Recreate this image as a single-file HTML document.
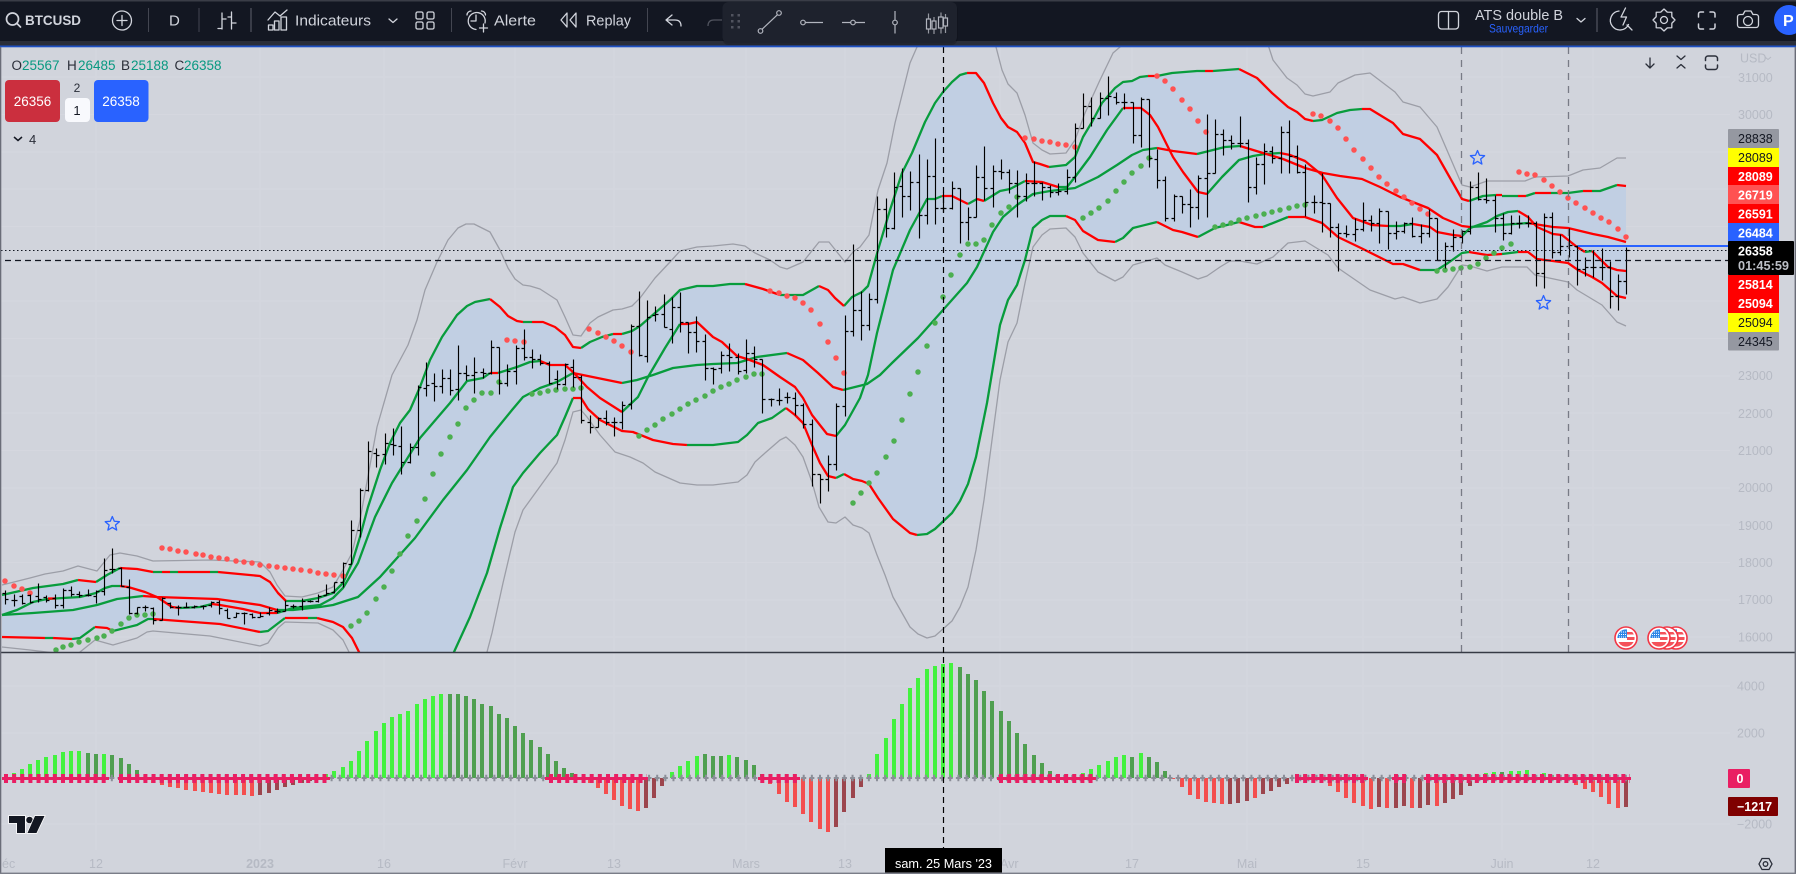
<!DOCTYPE html>
<html lang="fr"><head><meta charset="utf-8"><title>BTCUSD</title>
<style>
html,body{margin:0;padding:0;background:#d1d4dc;overflow:hidden}
svg{display:block;font-family:"Liberation Sans",sans-serif}
.ax{fill:#b6bac4;font-size:12.5px}
.bl{fill:#131722;font-size:12.5px}
.wh{fill:#fff;font-size:12.5px;font-weight:700}
.tb{fill:#d1d4dc;font-size:15px}
.ic{fill:none;stroke:#d1d4dc;stroke-width:1.3;stroke-linecap:round;stroke-linejoin:round}
.g{fill:none;stroke:#089c3c;stroke-width:2.3;stroke-linejoin:round}
.r{fill:none;stroke:#ff0000;stroke-width:2.3;stroke-linejoin:round}
.o{fill:#089981;font-size:13.5px}
.ol{fill:#2a2e39;font-size:13.5px}
</style></head><body>
<svg xmlns="http://www.w3.org/2000/svg" width="1796" height="874" viewBox="0 0 1796 874">
<defs>
<clipPath id="mp"><rect x="1" y="47" width="1794" height="605"/></clipPath>
<clipPath id="fc"><circle r="8.6"/></clipPath>
</defs>
<rect width="1796" height="874" fill="#d1d4dc"/>
<!-- grid -->
<path d="M0 77H1730M0 114.5H1730M0 152H1730M0 189H1730M0 226.500H1730M0 264H1730M0 301H1730M0 338.500H1730M0 376H1730M0 413H1730M0 450.500H1730M0 488H1730M0 525H1730M0 562.500H1730M0 600H1730M0 637H1730M0 686H1730M0 733H1730M0 824H1730M96 47V850M260 47V850M384 47V850M515 47V850M614 47V850M746 47V850M845 47V850M1000 47V850M1132 47V850M1247 47V850M1363 47V850M1502 47V850M1593 47V850" stroke="#fff" stroke-opacity=".09" stroke-width="1" fill="none"/>

<g clip-path="url(#mp)">
<!-- band fill -->
<path fill="#c1cfe3" d="M2 595L33 588 63 584 78 580 96 582 107 575 120 568 137 569 153 572 210 572 260 576 270 582 278 593 286 601 302 601 318 598 333 593 343 583 352 563 360 537 368 507 380 470 390 443 400 423 410 410 420 387 430 360 442 337 457 315 467 306 475 302 490 299 500 307 508 316 517 321 523 322 543 322 555 327 565 335 573 347 581 348 590 342 602 337 613 334 622 334 632 331 640 326 655 313 670 300 680 290 697 286 713 286 730 284 745 284 763 289 780 295 803 295 819 286 828 290 835 298 844 306 852 297 862 292 868 286 878 250 890 210 902 173 912 153 925 122 935 103 943 92 952 82 960 75 967 73 976 73 984 83 993 103 1001 118 1008 127 1017 132 1025 143 1033 162 1040 164 1049 167 1066 165 1075 157 1083 137 1092 122 1102 103 1115 88 1123 82 1132 81 1140 77 1157 76 1172 73 1197 71 1239 69 1257 78 1272 93 1288 107 1297 112 1305 119 1313 121 1322 120 1337 113 1350 110 1362 109 1370 109 1393 123 1403 134 1420 139 1437 155 1462 199 1469 201 1483 196 1518 196 1535 193 1568 193 1583 191 1600 191 1617 185 1626 186V298L1617 296 1602 283 1592 277 1578 270 1568 263 1553 261 1537 259 1528 252 1518 252 1502 254 1487 255 1469 252 1462 253 1448 263 1437 270 1420 270 1403 264 1393 264 1363 249 1338 237 1322 223 1305 217 1288 217 1263 227 1255 227 1239 222 1215 228 1198 237 1182 232 1173 230 1157 222 1133 228 1123 238 1115 242 1098 240 1083 231 1075 220 1066 216 1050 216 1042 220 1033 228 1025 260 1017 285 1008 300 1000 325 987 403 976 457 968 484 960 501 952 513 935 529 927 534 917 535 910 533 893 519 878 498 869 484 862 481 853 479 844 474 836 478 828 476 820 463 812 445 803 423 795 415 786 408 772 418 758 423 747 435 738 442 713 445 687 445 673 444 653 440 633 432 622 431 600 420 588 409 581 398 573 398 565 417 557 435 540 453 523 473 513 487 500 528 487 573 470 617 454 652 448 665 365 665 359 652 352 638 343 627 333 622 317 618 285 618 268 631 260 632 220 624 153 619 148 619 137 625 113 631 107 628 95 627 80 638 72 639 2 637Z"/>
<!-- outer gray bands -->
<path fill="none" stroke="#9c9ea7" stroke-width="1.3" stroke-linejoin="round" d="M2 585L30 578 45 574 63 571 78 566 97 571 110 555 120 553 137 556 153 561 210 560 260 562 270 572 277 585 285 596 302 597 318 593 333 587 343 570 352 553 360 520 377 427 392 375 408 345 417 320 425 290 437 262 448 240 458 228 466 224 474 224 490 232 500 250 508 268 515 279 523 285 530 286 540 289 557 300 565 317 573 335 581 336 590 323 598 317 613 310 622 309 632 306 640 298 655 278 670 262 680 251 697 247 713 246 733 244 745 246 755 253 770 260 780 267 787 269 803 262 819 242 829 242 837 252 845 262 853 252 860 247 869 235 878 190 887 163 895 123 910 63 917 47 925 20 985 20 996 47 1002 70 1008 84 1017 93 1025 115 1033 143 1042 150 1050 154 1066 153 1075 140 1085 113 1100 80 1113 53 1120 47 1130 20 1260 20 1273 60 1287 78 1297 85 1305 94 1313 96 1330 92 1338 83 1355 75 1370 73 1395 92 1403 102 1420 107 1437 127 1462 185 1470 187 1487 181 1525 181 1535 177 1568 176 1583 170 1600 168 1617 158 1626 158"/>
<path fill="none" stroke="#9c9ea7" stroke-width="1.3" stroke-linejoin="round" d="M2 647L30 650 55 653 60 665 75 665 80 652 95 640 113 645 137 638 147 632 153 631 210 636 260 646 268 643 278 628 285 622 318 623 333 630 343 640 349 652 355 665 480 665 487 652 492 633 503 583 515 532 523 510 557 463 565 440 573 412 581 410 587 417 600 435 615 452 630 457 643 463 655 472 680 483 697 485 713 485 738 482 747 475 755 462 765 453 780 440 786 437 795 445 803 457 812 482 819 507 828 522 836 523 845 517 853 525 862 528 869 533 877 555 885 575 893 597 910 627 918 634 927 638 935 636 952 621 960 607 968 587 976 550 984 500 992 440 1000 380 1008 342 1017 323 1025 283 1033 247 1042 235 1050 229 1066 228 1075 237 1083 253 1098 272 1115 281 1123 277 1133 265 1157 258 1165 265 1182 272 1198 279 1207 276 1220 267 1230 261 1240 261 1257 264 1273 257 1288 243 1305 241 1328 255 1338 268 1370 290 1395 299 1403 297 1420 303 1437 299 1448 287 1462 265 1470 266 1487 271 1502 267 1527 267 1535 275 1568 282 1577 290 1602 305 1617 322 1626 326"/>
<!-- green segments -->
<path class="g" d="M2 595L33 588 63 584 78 580M96 582L107 575 120 568M153 572H162M170 572H178M210 572H218M286 601L302 601 318 598 333 593 343 583 352 563 360 537 368 507 380 470 390 443 400 423 410 410 420 387 430 360 442 337 457 315 467 306 475 302 490 299M523 322H532M581 348L590 342 602 337 613 334M622 334L632 331 640 326 655 313 670 300 680 290 697 286 713 286 730 284 745 284M780 295L803 295 819 286M844 306L852 297 862 292 868 286 878 250 890 210 902 173 912 153 925 122 935 103 943 92 952 82 960 75 967 73M1049 167L1066 165 1075 157 1083 137 1092 122 1102 103 1115 88 1123 82 1132 81 1140 77 1148 76M1157 76L1172 73 1197 71 1205 71M1213 71L1239 69M1313 121L1322 120 1337 113 1350 110 1362 109M1469 201L1483 196 1496 195M1502 196L1518 196M1526 196L1535 193M1551 193L1568 193 1583 191M1592 191L1600 191 1617 185"/>
<path class="g" d="M45 638H53M72 639L80 638 95 627M113 631L137 625 148 619 153 619M260 632L268 631 285 618M308 618H317M448 665L454 652 470 617 487 573 500 528 513 487 523 473 540 453 557 435 565 417 573 398M687 445L713 445 738 442 747 435 758 423 772 418 786 408M836 478L844 474M917 535L927 534 935 529 952 513 960 501 968 484 976 457 987 403 1000 325 1008 300 1017 285 1025 260 1033 228 1042 220 1050 216 1066 216M1115 242L1123 238 1133 228 1157 222M1198 237L1215 228 1239 222M1263 227L1288 217M1420 270L1437 270 1448 263 1462 253 1469 252M1502 254L1518 252"/>
<path class="g" d="M2 615L17 610 33 602 47 599 63 598 80 597 96 593 105 588 112 586 120 586M180 608L200 607 212 604M277 613L293 608 320 605 333 598 343 588 358 563 375 517 392 483 420 438 450 403 467 381 483 378 490 373M498 373L517 367 530 362 540 361M622 412L638 397 648 377 665 348 680 324M836 436L845 425 860 398 868 375 877 333 893 270 910 230 927 199 935 199 942 196M968 204L977 199M984 201L1000 191 1010 189 1025 181M1058 187L1067 187 1075 177 1090 157 1107 130 1123 108M1207 194L1222 177 1239 160 1253 156 1265 154 1280 153M1388 226L1400 226 1413 224M1462 236L1470 228 1487 222 1497 216 1508 212 1518 211M1585 252L1592 251"/>
<path class="g" d="M2 615L33 613 73 610 97 605 117 599 143 596M277 610L293 610 320 607 333 605 358 597 380 577 415 538 443 500 467 470 490 437 512 410 523 397 540 388 557 382 573 373M622 383L637 380 653 375 673 368 697 365 713 364 737 363 757 357 787 353M843 390L867 384 880 375 892 363 918 338 943 310 967 283 977 267 993 232 1003 217 1017 205 1033 194 1050 191 1067 189 1075 188 1098 177 1117 165 1132 155 1143 150 1157 148M1197 154L1225 147 1240 146M1470 227L1487 226 1528 223"/>
<!-- red segments -->
<path class="r" d="M78 580L96 582M120 568L137 569 153 572M162 572H170M178 572H210M218 572L260 576 270 582 278 593 286 601M490 299L500 307 508 316 517 321 523 322M532 322L543 322 555 327 565 335 573 347 581 348M613 334H622M745 284L763 289 780 295M819 286L828 290 835 298 844 306M967 73L976 73 984 83 993 103 1001 118 1008 127 1017 132 1025 143 1033 162 1040 164 1049 167M1148 76H1157M1205 71H1213M1239 69L1257 78 1272 93 1288 107 1297 112 1305 119 1313 121M1362 109L1370 109 1393 123 1403 134 1420 139 1437 155 1462 199 1469 201M1496 195H1502M1518 196H1526M1535 193H1551M1583 191H1592M1617 185L1626 186"/>
<path class="r" d="M2 637L45 638M53 638L72 639M95 627L107 628 113 631M153 619L220 624 260 632M285 618H308M317 618L333 622 343 627 352 638 359 652 365 665M573 398L581 398 588 409 600 420 622 431 633 432 653 440 673 444 687 445M786 408L795 415 803 423 812 445 820 463 828 476 836 478M844 474L853 479 862 481 869 484 878 498 893 519 910 533 917 535M1066 216L1075 220 1083 231 1098 240 1115 242M1157 222L1173 230 1182 232 1198 237M1239 222L1255 227 1263 227M1288 217L1305 217 1322 223 1338 237 1363 249 1393 264 1403 264 1420 270M1469 252L1487 255 1502 254M1518 252L1528 252 1537 259 1553 261 1568 263 1578 270 1592 277 1602 283 1617 296 1626 298"/>
<path class="r" d="M48 598.500L55 598.500M120 586L128 587 145 592 157 597 172 607 180 608M212 604L220 605 243 609 260 613 277 613M490 373H498M540 361L550 365 565 365 573 372 587 387 600 398 622 412M680 324L688 324 697 322 713 337 722 342 737 356 747 359 763 365 780 377 795 387 803 398 812 415 827 434 836 436M942 196L952 196 968 204M977 199L984 201M1025 181L1042 182 1058 187M1123 108L1132 108 1141 108 1150 115 1158 127 1173 157 1183 172 1198 192 1207 194M1280 153L1290 155 1305 161 1322 175 1337 198 1353 218 1372 225 1388 226M1413 224L1430 227 1437 232 1453 235 1462 236M1518 211L1528 217 1537 227 1553 234 1562 235 1577 247 1585 252M1592 251L1608 267 1617 270 1626 271"/>
<path class="r" d="M143 596L157 597 217 599 260 605 277 610M573 373L622 383M787 353L803 360 818 373 833 387 843 390M1157 148L1173 151 1197 154M1240 146L1263 153 1283 159 1305 168 1323 173 1340 176 1362 179 1380 187 1400 197 1428 208 1443 218 1462 226 1470 227M1528 223L1553 227 1568 228 1593 234 1608 237 1626 242"/>
<!-- dots -->
<path fill="none" stroke="#ff5252" stroke-width="5.500" stroke-linecap="round" d="M5 581h0M14 586h0M22 589h0M30 593h0M162 548h0M170 549h0M178 551h0M186 552h0M196 554h0M203 555h0M211 557h0M219 558h0M227 559h0M236 561h0M244 562h0M252 563h0M260 565h0M269 566h0M277 567h0M285 568h0M293 569h0M301 570h0M310 571h0M318 573h0M326 574h0M334 575h0M343 576h0M507 340h0M515 341h0M524 342h0M589 329h0M598 333h0M606 337h0M614 341h0M622 346h0M631 352h0M770 291h0M779 293h0M787 296h0M795 298h0M803 303h0M811 310h0M820 324h0M828 342h0M836 358h0M844 373h0M1025 138h0M1034 139h0M1042 141h0M1050 142h0M1058 144h0M1066 145h0M1075 147h0M1157 76h0M1165 81h0M1173 89h0M1182 100h0M1190 109h0M1198 121h0M1206 132h0M1313 114h0M1321 116h0M1330 121h0M1338 128h0M1346 139h0M1354 150h0M1363 159h0M1371 168h0M1379 177h0M1387 184h0M1396 191h0M1404 197h0M1412 203h0M1420 209h0M1428 214h0M1519 172h0M1527 174h0M1535 175h0M1544 180h0M1552 186h0M1560 192h0M1568 198h0M1576 203h0M1585 208h0M1593 213h0M1601 218h0M1609 222h0M1618 229h0M1626 237h0"/>
<path fill="none" stroke="#4caf50" stroke-width="5.500" stroke-linecap="round" d="M56 650h0M63 647h0M71 645h0M79 642h0M88 640h0M97 638h0M104 636h0M112 631h0M121 624h0M129 618h0M137 615h0M145 615h0M153 614h0M351 626h0M359 621h0M367 613h0M376 599h0M384 587h0M392 571h0M400 554h0M408 536h0M417 521h0M425 499h0M433 474h0M441 454h0M450 437h0M458 424h0M466 408h0M474 400h0M482 393h0M491 393h0M499 382h0M532 394h0M540 393h0M548 391h0M556 390h0M565 389h0M573 389h0M581 388h0M639 436h0M647 430h0M655 425h0M663 419h0M672 414h0M680 409h0M688 404h0M696 400h0M705 396h0M713 391h0M721 387h0M729 384h0M737 380h0M746 377h0M754 374h0M762 374h0M853 503h0M861 493h0M869 483h0M877 473h0M886 457h0M894 441h0M902 420h0M910 394h0M918 372h0M927 346h0M935 323h0M943 297h0M951 275h0M960 255h0M968 244h0M976 244h0M984 240h0M992 225h0M1001 213h0M1009 207h0M1017 197h0M1083 218h0M1091 213h0M1099 208h0M1108 201h0M1116 191h0M1124 182h0M1132 173h0M1141 166h0M1149 158h0M1215 227h0M1223 225h0M1231 223h0M1239 220h0M1247 218h0M1256 216h0M1264 214h0M1272 212h0M1280 210h0M1289 208h0M1297 206h0M1305 205h0M1437 271h0M1445 270h0M1453 269h0M1461 268h0M1470 267h0M1478 264h0M1486 258h0M1494 253h0M1502 248h0M1511 244h0"/>
<!-- OHLC bars -->
<path transform="translate(.5 .5)" fill="none" stroke="#000" stroke-width="1.150" d="M5 590V604M5 593h-3M5 599h3M14 594V606M14 600h-3M14 600h3M22 594V604M22 596h-3M22 603h3M30 594V603M30 595h-3M30 602h3M38 583V602M38 596h-3M38 599h3M46 595V602M46 597h-3M46 600h3M55 594V608M55 598h-3M55 605h3M63 588V608M63 605h-3M63 590h3M71 586V596M71 590h-3M71 594h3M79 591V597M79 594h-3M79 595h3M88 589V596M88 595h-3M88 595h3M96 590V603M96 596h-3M96 591h3M104 558V595M104 591h-3M104 570h3M112 548V573M112 569h-3M112 569h3M121 567V586M121 568h-3M121 586h3M129 579V614M129 587h-3M129 613h3M137 607V614M137 613h-3M137 607h3M145 605V611M145 607h-3M145 607h3M153 607V624M153 608h-3M153 620h3M162 597V620M162 620h-3M162 598h3M170 602V608M170 603h-3M170 607h3M178 605V615M178 607h-3M178 607h3M186 602V607M186 607h-3M186 607h3M194 605V608M194 607h-3M194 606h3M203 605V609M203 606h-3M203 606h3M211 601V607M211 605h-3M211 602h3M219 600V614M219 602h-3M219 608h3M227 608V618M227 610h-3M227 618h3M236 612V617M236 617h-3M236 613h3M244 612V624M244 613h-3M244 613h3M252 613V618M252 614h-3M252 617h3M260 612V617M260 617h-3M260 616h3M269 607V615M269 613h-3M269 610h3M277 608V613M277 611h-3M277 611h3M285 600V611M285 611h-3M285 605h3M293 604V608M293 606h-3M293 606h3M302 598V610M302 606h-3M302 601h3M310 600V602M310 601h-3M310 601h3M318 594V602M318 601h-3M318 596h3M326 584V595M326 595h-3M326 593h3M334 582V593M334 592h-3M334 582h3M343 562V587M343 582h-3M343 563h3M351 520V564M351 564h-3M351 530h3M360 488V537M360 530h-3M360 490h3M368 441V491M368 490h-3M368 451h3M376 448V467M376 453h-3M376 455h3M385 433V464M385 454h-3M385 443h3M393 428V455M393 444h-3M393 445h3M401 426V474M401 446h-3M401 462h3M410 443V463M410 462h-3M410 447h3M418 385V455M418 447h-3M418 387h3M426 362V396M426 388h-3M426 385h3M434 373V401M434 383h-3M434 386h3M442 369V393M442 386h-3M442 378h3M450 369V395M450 378h-3M450 390h3M458 345V400M458 389h-3M458 373h3M466 365V380M466 373h-3M466 375h3M474 357V393M474 375h-3M474 372h3M483 368V378M483 372h-3M483 373h3M491 340V374M491 373h-3M491 347h3M499 347V394M499 347h-3M499 383h3M507 364V386M507 383h-3M507 371h3M516 345V384M516 371h-3M516 348h3M524 329V360M524 348h-3M524 357h3M532 349V368M532 357h-3M532 359h3M540 354V365M540 359h-3M540 363h3M549 361V384M549 363h-3M549 383h3M557 370V389M557 379h-3M557 384h3M565 363V385M565 384h-3M565 364h3M573 359V387M573 367h-3M573 377h3M581 375V423M581 377h-3M581 420h3M590 415V433M590 422h-3M590 427h3M598 417V427M598 427h-3M598 418h3M606 410V425M606 418h-3M606 422h3M614 417V436M614 422h-3M614 422h3M622 401V429M622 422h-3M622 405h3M631 324V409M631 404h-3M631 326h3M639 291V356M639 326h-3M639 355h3M647 300V362M647 356h-3M647 317h3M655 306V321M655 315h-3M655 314h3M664 294V327M664 314h-3M664 327h3M672 297V343M672 329h-3M672 307h3M680 292V332M680 307h-3M680 322h3M688 322V353M688 322h-3M688 332h3M696 316V352M696 332h-3M696 341h3M705 334V380M705 341h-3M705 368h3M713 367V384M713 368h-3M713 369h3M721 351V373M721 368h-3M721 355h3M729 343V371M729 355h-3M729 357h3M738 353V374M738 357h-3M738 371h3M746 339V373M746 370h-3M746 353h3M754 346V367M754 353h-3M754 359h3M762 359V413M762 359h-3M762 399h3M771 398V406M771 399h-3M771 399h3M779 388V405M779 400h-3M779 400h3M787 392V403M787 397h-3M787 397h3M795 392V415M795 398h-3M795 405h3M803 403V428M803 405h-3M803 424h3M812 419V486M812 424h-3M812 474h3M820 474V503M820 474h-3M820 479h3M828 455V491M828 479h-3M828 464h3M836 403V470M836 464h-3M836 406h3M845 315V416M845 406h-3M845 331h3M853 244V336M853 331h-3M853 310h3M861 291V340M861 310h-3M861 325h3M869 293V330M869 325h-3M869 299h3M877 196V303M877 299h-3M877 209h3M886 198V237M886 209h-3M886 228h3M894 172V229M894 228h-3M894 187h3M902 168V217M902 186h-3M902 196h3M910 171V210M910 196h-3M910 182h3M919 154V238M919 182h-3M919 215h3M927 159V224M927 215h-3M927 176h3M935 138V224M935 176h-3M935 208h3M943 192V212M943 208h-3M943 208h3M952 181V209M952 208h-3M952 188h3M960 188V243M960 188h-3M960 222h3M968 207V240M968 222h-3M968 217h3M976 165V217M976 217h-3M976 177h3M984 146V200M984 177h-3M984 188h3M993 165V207M993 188h-3M993 171h3M1001 159V179M1001 171h-3M1001 172h3M1009 169V193M1009 172h-3M1009 183h3M1017 170V217M1017 183h-3M1017 196h3M1026 173V201M1026 196h-3M1026 183h3M1034 161V196M1034 183h-3M1034 183h3M1042 182V200M1042 183h-3M1042 187h3M1050 185V197M1050 187h-3M1050 192h3M1058 183V195M1058 192h-3M1058 191h3M1067 169V194M1067 191h-3M1067 177h3M1075 123V182M1075 177h-3M1075 128h3M1083 93V128M1083 128h-3M1083 106h3M1091 97V126M1091 106h-3M1091 118h3M1100 92V118M1100 118h-3M1100 98h3M1108 76V115M1108 98h-3M1108 96h3M1116 92V104M1116 97h-3M1116 102h3M1124 93V109M1124 102h-3M1124 102h3M1133 102V143M1133 102h-3M1133 135h3M1141 97V147M1141 135h-3M1141 99h3M1149 99V167M1149 99h-3M1149 158h3M1157 149V188M1157 159h-3M1157 180h3M1165 176V221M1165 180h-3M1165 218h3M1174 194V221M1174 218h-3M1174 196h3M1182 196V213M1182 196h-3M1182 204h3M1190 189V227M1190 204h-3M1190 207h3M1198 175V219M1198 207h-3M1198 178h3M1207 114V217M1207 178h-3M1207 173h3M1215 119V173M1215 173h-3M1215 134h3M1223 129V155M1223 134h-3M1223 140h3M1231 135V149M1231 140h-3M1231 143h3M1240 116V147M1240 143h-3M1240 143h3M1248 139V202M1248 143h-3M1248 187h3M1256 157V194M1256 187h-3M1256 164h3M1264 143V184M1264 164h-3M1264 151h3M1272 146V163M1272 151h-3M1272 158h3M1281 126V173M1281 158h-3M1281 132h3M1289 120V173M1289 132h-3M1289 156h3M1297 145V173M1297 156h-3M1297 172h3M1305 164V216M1305 172h-3M1305 202h3M1314 195V213M1314 202h-3M1314 202h3M1322 173V232M1322 202h-3M1322 203h3M1330 203V237M1330 203h-3M1330 227h3M1338 223V271M1338 227h-3M1338 233h3M1346 225V237M1346 233h-3M1346 234h3M1355 218V241M1355 234h-3M1355 229h3M1363 202V231M1363 229h-3M1363 220h3M1371 215V231M1371 220h-3M1371 223h3M1379 208V243M1379 223h-3M1379 211h3M1388 211V249M1388 211h-3M1388 233h3M1396 221V239M1396 233h-3M1396 231h3M1404 222V233M1404 231h-3M1404 223h3M1412 217V237M1412 223h-3M1412 236h3M1421 224V243M1421 236h-3M1421 233h3M1429 209V237M1429 233h-3M1429 218h3M1437 218V260M1437 218h-3M1437 260h3M1445 242V268M1445 260h-3M1445 246h3M1453 229V251M1453 246h-3M1453 237h3M1462 230V243M1462 237h-3M1462 231h3M1470 181V234M1470 231h-3M1470 187h3M1478 172V200M1478 187h-3M1478 199h3M1486 178V203M1486 199h-3M1486 200h3M1495 195V232M1495 200h-3M1495 218h3M1503 213V240M1503 218h-3M1503 233h3M1511 215V234M1511 233h-3M1511 223h3M1519 215V228M1519 223h-3M1519 223h3M1528 215V227M1528 223h-3M1528 223h3M1536 221V286M1536 223h-3M1536 273h3M1544 213V288M1544 273h-3M1544 217h3M1552 212V258M1552 217h-3M1552 252h3M1560 234V255M1560 252h-3M1560 246h3M1569 228V257M1569 246h-3M1569 245h3M1577 245V285M1577 246h-3M1577 269h3M1585 257V276M1585 269h-3M1585 267h3M1593 250V277M1593 267h-3M1593 267h3M1602 248V280M1602 267h-3M1602 267h3M1610 261V308M1610 267h-3M1610 296h3M1618 274V310M1618 296h-3M1618 281h3M1626 247V294M1626 281h-3M1626 250h3"/>
<!-- stars -->
<g fill="none" stroke="#2962ff" stroke-width="1.3" stroke-linejoin="round">
<polygon transform="translate(112.300 524)" points="0,-7.500 2,-2.750 7.100,-2.300 3.200,1.050 4.400,6.070 0,3.400 -4.400,6.070 -3.200,1.050 -7.100,-2.300 -2,-2.750"/>
<polygon transform="translate(1477.500 158)" points="0,-7.500 2,-2.750 7.100,-2.300 3.200,1.050 4.400,6.070 0,3.400 -4.400,6.070 -3.200,1.050 -7.100,-2.300 -2,-2.750"/>
<polygon transform="translate(1543.500 303)" points="0,-7.500 2,-2.750 7.100,-2.300 3.200,1.050 4.400,6.070 0,3.400 -4.400,6.070 -3.200,1.050 -7.100,-2.300 -2,-2.750"/>
</g>
<!-- flags -->
<g transform="translate(1676 638)"><circle r="11" fill="#fff" stroke="#f23645" stroke-width="1.600"/><g clip-path="url(#fc)"><rect x="-9" y="-9" width="10" height="9" fill="#2e86e8"/><rect x="1" y="-6" width="9" height="2.500" fill="#f4525a"/><rect x="1" y="-1" width="9" height="3" fill="#f4525a"/><rect x="-9" y="4" width="18" height="5" fill="#f4525a"/></g></g>
<g transform="translate(1667 638)"><circle r="11" fill="#fff" stroke="#f23645" stroke-width="1.600"/><g clip-path="url(#fc)"><rect x="-9" y="-9" width="10" height="9" fill="#2e86e8"/><rect x="1" y="-6" width="9" height="2.500" fill="#f4525a"/><rect x="1" y="-1" width="9" height="3" fill="#f4525a"/><rect x="-9" y="4" width="18" height="5" fill="#f4525a"/></g></g>
<g transform="translate(1659 638)"><circle r="11" fill="#fff" stroke="#f23645" stroke-width="1.600"/><g clip-path="url(#fc)"><rect x="-9" y="-9" width="10" height="9" fill="#2e86e8"/><rect x="1" y="-6" width="9" height="2.500" fill="#f4525a"/><rect x="1" y="-1" width="9" height="3" fill="#f4525a"/><rect x="-9" y="4" width="18" height="5" fill="#f4525a"/></g><path d="M-7-6H0M-7-3.500H0M-7-1H0" stroke="#fff" stroke-width="1" stroke-dasharray="1 1"/></g>
<g transform="translate(1626 638)"><circle r="11" fill="#fff" stroke="#f23645" stroke-width="1.600"/><g clip-path="url(#fc)"><rect x="-9" y="-9" width="10" height="9" fill="#2e86e8"/><rect x="1" y="-6" width="9" height="2.500" fill="#f4525a"/><rect x="1" y="-1" width="9" height="3" fill="#f4525a"/><rect x="-9" y="4" width="18" height="5" fill="#f4525a"/></g><path d="M-7-6H0M-7-3.500H0M-7-1H0" stroke="#fff" stroke-width="1" stroke-dasharray="1 1"/></g>
<!-- vertical drawn dashes -->
<path d="M1461.500 47V652M1568.500 47V652" stroke="#787b86" stroke-width="1.300" stroke-dasharray="7 6" fill="none"/>
</g>

<!-- price/crosshair lines -->
<path d="M1578 246H1728" stroke="#2962ff" stroke-width="2"/>
<path d="M1 250.500H1728" stroke="#131722" stroke-width="1" stroke-dasharray="1.500 2.500"/>
<path d="M5 260.500H1728" stroke="#131722" stroke-width="1.200" stroke-dasharray="6 4"/>

<!-- divider -->
<path d="M1 652.500H1795" stroke="#363a45" stroke-width="1.500"/>

<!-- histogram -->
<g fill="none" stroke-width="4">
<path stroke="#43f23f" d="M14 778v-5M22 778v-9M30 778v-14M38 778v-18M46 778v-21M55 778v-23M63 778v-26M71 778v-27M79 778v-27M104 778v-24M326 778v-4M334 778v-7M343 778v-11M351 778v-17M359 778v-27M367 778v-37M376 778v-47M384 778v-55M392 778v-61M400 778v-64M408 778v-67M417 778v-74M425 778v-79M433 778v-82M441 778v-84M672 778v-6M680 778v-12M688 778v-17M697 778v-22M729 778v-23M869 778v-4M877 778v-24M886 778v-40M894 778v-59M902 778v-74M910 778v-90M918 778v-100M927 778v-109M935 778v-112M943 778v-114M951 778v-115M1083 778v-5M1091 778v-9M1099 778v-13M1108 778v-17M1116 778v-21M1124 778v-23M1141 778v-25M1305 778v-3M1486 778v-5M1494 778v-6M1511 778v-7M1519 778v-7M1527 778v-8M1544 778v-5M1552 778v-3"/>
<path stroke="#4f9f50" d="M88 778v-25M96 778v-24M112 778v-23M121 778v-20M129 778v-14M137 778v-8M450 778v-84M458 778v-84M466 778v-82M474 778v-79M482 778v-74M491 778v-72M499 778v-64M507 778v-60M515 778v-52M523 778v-45M531 778v-38M540 778v-31M548 778v-24M556 778v-17M564 778v-10M572 778v-5M705 778v-24M713 778v-22M721 778v-22M737 778v-21M746 778v-18M754 778v-13M762 778v-4M960 778v-111M968 778v-104M976 778v-98M984 778v-87M992 778v-77M1001 778v-67M1009 778v-57M1017 778v-45M1025 778v-34M1034 778v-23M1042 778v-15M1050 778v-7M1132 778v-21M1149 778v-21M1157 778v-16M1165 778v-7M1502 778v-6M1535 778v-3"/>
<path stroke="#f44e4e" d="M153 778v5M162 778v7M170 778v9M178 778v10M186 778v12M195 778v13M203 778v14M211 778v15M219 778v16M227 778v17M236 778v17M244 778v17M252 778v18M590 778v5M598 778v10M606 778v16M614 778v22M622 778v28M630 778v31M638 778v33M770 778v6M779 778v16M787 778v24M795 778v29M803 778v36M811 778v44M820 778v51M828 778v54M1173 778v1M1182 778v9M1190 778v17M1198 778v21M1206 778v24M1214 778v25M1222 778v26M1255 778v20M1330 778v8M1338 778v14M1346 778v20M1354 778v25M1363 778v28M1371 778v31M1387 778v30M1412 778v30M1437 778v28M1576 778v7M1585 778v11M1593 778v14M1601 778v19M1609 778v26M1618 778v30"/>
<path stroke="#9c454d" d="M260 778v17M269 778v15M277 778v12M285 778v9M293 778v7M302 778v5M310 778v3M646 778v30M654 778v20M662 778v8M836 778v49M844 778v34M853 778v20M861 778v9M1230 778v26M1238 778v25M1247 778v23M1263 778v16M1271 778v13M1279 778v9M1287 778v6M1379 778v29M1396 778v30M1404 778v28M1420 778v30M1428 778v27M1445 778v25M1453 778v21M1461 778v17M1470 778v8M1626 778v29"/>
</g>
<!-- gray zero-line crosses -->
<path d="M3.500 778H1631" stroke="#8b8e98" stroke-width="2" stroke-dasharray="5 3.140"/>
<path d="M5 778H1631" stroke="#8b8e98" stroke-width="6.500" stroke-dasharray="2 6.140"/>
<!-- pink crosses -->
<g fill="none" stroke="#e91e63">
<path stroke-width="3" d="M2 778.500H109M118 778.500H330M545 778.500H648M758 778.500H800M997 778.500H1096M1296 778.500H1368M1392 778.500H1406M1424 778.500H1631"/>
<g stroke-width="9" stroke-dasharray="4 4.140">
<path d="M4 778.500H108"/><path d="M119 778.500H330"/><path d="M549 778.500H647"/><path d="M760.300 778.500H800"/><path d="M999 778.500H1095"/><path d="M1295 778.500H1366"/><path d="M1394 778.500H1406"/><path d="M1426 778.500H1630"/>
</g></g>

<!-- crosshair vertical -->
<path d="M943.500 47V848" stroke="#000" stroke-width="1.200" stroke-dasharray="6 4"/>

<!-- TV logo -->
<g fill="#131722" stroke="#fff" stroke-width="1.600" paint-order="stroke" stroke-linejoin="miter">
<path d="M9 816H25V833H17V823H9Z"/>
<circle cx="29.500" cy="820" r="3.300"/>
<path d="M35 816H44.500L36.500 833H27.500Z"/>
</g>

<!-- axis labels -->
<g class="ax">
<text x="1740" y="62.500">USD</text>
<path d="M1765 57l3 2.500 3-2.500" fill="none" stroke="#b6bac4" stroke-width="1"/>
<text x="1738" y="82">31000</text><text x="1738" y="119">30000</text>
<text x="1738" y="380">23000</text><text x="1738" y="418">22000</text><text x="1738" y="455">21000</text><text x="1738" y="492">20000</text><text x="1738" y="530">19000</text><text x="1738" y="567">18000</text><text x="1738" y="604">17000</text><text x="1738" y="641.500">16000</text>
<text x="1737" y="690.500">4000</text><text x="1737" y="737.500">2000</text><text x="1737" y="828.500">−2000</text>
<text x="2" y="868">éc</text><text x="96" y="868" text-anchor="middle">12</text><text x="260" y="868" text-anchor="middle" font-weight="700">2023</text><text x="384" y="868" text-anchor="middle">16</text><text x="515" y="868" text-anchor="middle">Févr</text><text x="614" y="868" text-anchor="middle">13</text><text x="746" y="868" text-anchor="middle">Mars</text><text x="845" y="868" text-anchor="middle">13</text><text x="1000" y="868">Avr</text><text x="1132" y="868" text-anchor="middle">17</text><text x="1247" y="868" text-anchor="middle">Mai</text><text x="1363" y="868" text-anchor="middle">15</text><text x="1502" y="868" text-anchor="middle">Juin</text><text x="1593" y="868" text-anchor="middle">12</text>
</g>

<!-- time label -->
<rect x="885" y="848" width="117" height="24.500" fill="#000"/>
<text x="943.500" y="868" text-anchor="middle" fill="#fff" font-size="12.500" textLength="97" lengthAdjust="spacingAndGlyphs">sam. 25 Mars '23</text>

<!-- hex settings -->
<path d="M1759 864l3-5.500h7l3 5.500-3 5.500h-7z" fill="none" stroke="#2a2e39" stroke-width="1.300"/>
<circle cx="1765.500" cy="864" r="2.300" fill="none" stroke="#2a2e39" stroke-width="1.300"/>

<!-- price badges -->
<g>
<rect x="1728" y="129" width="51" height="19" fill="#9598a1" rx="1"/><text class="bl" x="1738" y="143">28838</text>
<rect x="1728" y="148" width="51" height="19" fill="#ffff00"/><text class="bl" x="1738" y="162">28089</text>
<rect x="1728" y="167" width="51" height="18.500" fill="#ff0000"/><text class="wh" x="1738" y="181">28089</text>
<rect x="1728" y="185" width="51" height="19" fill="#ff5252"/><text class="wh" x="1738" y="199.500">26719</text>
<rect x="1728" y="204" width="51" height="19.500" fill="#ff0000"/><text class="wh" x="1738" y="218.500">26591</text>
<rect x="1728" y="223" width="51" height="18.500" fill="#2962ff"/><text class="wh" x="1738" y="237.500">26484</text>
<rect x="1728" y="241" width="66" height="34" fill="#000" rx="1"/>
<text class="wh" x="1738" y="255.500">26358</text>
<text x="1738" y="270" fill="#bcbfc6" font-size="12.500" font-weight="700" textLength="51" lengthAdjust="spacingAndGlyphs">01:45:59</text>
<rect x="1728" y="275" width="51" height="19" fill="#ff0000"/><text class="wh" x="1738" y="289">25814</text>
<rect x="1728" y="294" width="51" height="19" fill="#ff0000"/><text class="wh" x="1738" y="308">25094</text>
<rect x="1728" y="313" width="51" height="19" fill="#ffff00"/><text class="bl" x="1738" y="327">25094</text>
<rect x="1728" y="332" width="51" height="18.500" fill="#9598a1" rx="1"/><text class="bl" x="1738" y="346">24345</text>
<rect x="1728" y="769" width="22" height="19" fill="#e91e63" rx="1"/><text class="wh" x="1740" y="783" text-anchor="middle">0</text>
<rect x="1728" y="797" width="50" height="19" fill="#7f0000" rx="1"/><text class="wh" x="1737" y="811">−1217</text>
</g>

<!-- chart top-right icons -->
<g class="ic" style="stroke:#2a2e39">
<path d="M1650 58V68M1646 64l4 4 4-4"/>
<path d="M1677 56l4 3.500 4-3.500M1677 68l4-3.500 4 3.500"/>
<path d="M1705.500 60.500V58.500a2.500 2.500 0 0 1 2.500-2.500h7a2.500 2.500 0 0 1 2.500 2.500V60.500M1705.500 65v2a2.500 2.500 0 0 0 2.500 2.500h7a2.500 2.500 0 0 0 2.500-2.500V65" style="stroke-width:1.500"/>
</g>

<!-- legend -->
<text class="ol" x="11.500" y="70">O</text><text class="o" x="22" y="70">25567</text>
<text class="ol" x="67" y="70">H</text><text class="o" x="78" y="70">26485</text>
<text class="ol" x="121" y="70">B</text><text class="o" x="131" y="70">25188</text>
<text class="ol" x="174.500" y="70">C</text><text class="o" x="184" y="70">26358</text>
<rect x="5" y="80" width="55" height="42" rx="4" fill="#cb2f3e"/>
<text x="32.500" y="106" fill="#fff" font-size="13.500" text-anchor="middle">26356</text>
<text x="77" y="92" fill="#2a2e39" font-size="12" text-anchor="middle">2</text>
<rect x="65" y="98" width="25" height="24" rx="4" fill="#f8f9fd"/>
<text x="77" y="115" fill="#131722" font-size="13" text-anchor="middle">1</text>
<rect x="94" y="80" width="54.500" height="42" rx="4" fill="#2962ff"/>
<text x="121" y="106" fill="#fff" font-size="13.500" text-anchor="middle">26358</text>
<path d="M14 137l4 3.500 4-3.500" fill="none" stroke="#131722" stroke-width="1.500"/>
<text x="29" y="144" fill="#2a2e39" font-size="13">4</text>

<!-- top toolbar -->
<rect x="0" y="0" width="1796" height="41" fill="#131722"/>
<rect x="0" y="0" width="1796" height="1.500" fill="#3a3d47"/>
<rect x="0" y="41" width="1796" height="4.500" fill="#2a2e39"/>
<rect x="0" y="45.500" width="1796" height="1.800" fill="#1e50c2"/>
<g class="ic">
<circle cx="12.500" cy="19" r="6" style="stroke-width:1.700"/><path d="M17 23.500l3.500 3.500" style="stroke-width:1.700"/>
<circle cx="122" cy="20.500" r="9.500"/><path d="M117 20.500h10M122 15.500v10"/>
<path d="M222 13V29M218 28.500h4M222 19h4M231.500 12V29M228 17h3.500M231.500 23h4.500"/>
<path d="M268.500 30v-5h4.500v5zM274.500 30v-9h4.500v9zM281 30V17h5.500v13zM268 20l7-8 5 4 7-6"/>
<path d="M389 19l4 3.500 4-3.500"/>
<rect x="416" y="12" width="7" height="7" rx="1.500"/><rect x="427" y="12" width="7" height="7" rx="1.500"/><rect x="416" y="22" width="7" height="7" rx="1.500"/><rect x="427" y="22" width="7" height="7" rx="1.500"/>
<path d="M485 23a8.500 8.500 0 1 0-9 6.500M476 15v6h-5M467 15a4 4 0 0 1 4-4M481.500 11a4 4 0 0 1 4 4M483.500 24v8M479.500 28h8"/>
<path d="M567 13l-6 7 6 7zM576 13l-6 7 6 7z"/>
<path d="M672 15l-6 5 6 5M666 20h9q6 0 6 6"/>
</g>
<path d="M722 20h-8q-6 0-6 6" fill="none" stroke="#50535e" stroke-width="1.300"/>
<g stroke="#434651" stroke-width="1"><path d="M148.500 8V32M199 8V32M451.500 8V32M647.500 8V32"/><path d="M251 8V32M1597 8V32" stroke-width="1.600"/></g>
<text x="25" y="25" fill="#d1d4dc" font-size="14" font-weight="700" textLength="56" lengthAdjust="spacingAndGlyphs">BTCUSD</text>
<text class="tb" x="169" y="25.500">D</text>
<text class="tb" x="295" y="25.500" textLength="76" lengthAdjust="spacingAndGlyphs">Indicateurs</text>
<text class="tb" x="494" y="25.500" textLength="42" lengthAdjust="spacingAndGlyphs">Alerte</text>
<text class="tb" x="586" y="25.500" textLength="45" lengthAdjust="spacingAndGlyphs">Replay</text>

<!-- floating drawing toolbar -->
<rect x="722.500" y="3" width="235" height="42" rx="6" fill="#000" opacity=".18"/>
<rect x="722.500" y="2" width="234.500" height="41" rx="6" fill="#1e222d"/>
<g fill="#50535e"><rect x="731" y="14" width="2.500" height="2.500"/><rect x="737.500" y="14" width="2.500" height="2.500"/><rect x="731" y="20" width="2.500" height="2.500"/><rect x="737.500" y="20" width="2.500" height="2.500"/><rect x="731" y="26" width="2.500" height="2.500"/><rect x="737.500" y="26" width="2.500" height="2.500"/></g>
<g fill="none" stroke="#b2b5be" stroke-width="1.200">
<circle cx="760.500" cy="31" r="2.300"/><circle cx="779" cy="13" r="2.300"/><path d="M762 29.300L777.500 14.700"/>
<circle cx="803" cy="22.500" r="2.300"/><path d="M805.300 22.500H823"/>
<circle cx="853" cy="22.500" r="2.300"/><path d="M842 22.500h8.700M855.300 22.500H865"/>
<circle cx="895" cy="22.500" r="2.300"/><path d="M895 11v9.200M895 24.800V33.500"/>
<path d="M928.500 13.500v20M934 17v17M941 12.500v21M945.500 14v19" stroke="#9598a1"/>
<rect x="926.500" y="19" width="4" height="10" fill="#1e222d"/><rect x="932" y="21" width="4" height="8" fill="#1e222d"/><rect x="938.500" y="17" width="4.500" height="11" fill="#1e222d"/><rect x="943.500" y="18" width="4" height="8" fill="#1e222d"/>
</g>

<!-- right toolbar -->
<g class="ic">
<rect x="1438.500" y="11.500" width="20" height="17.500" rx="3"/><path d="M1448.500 11.500V29"/>
<path d="M1577 18.500l4 3.500 4-3.500"/>
<path d="M1619 11a9.500 9.500 0 1 0 9.500 13.500M1627 25l5 5M1625.500 8l-4.500 9h5.500l-3.500 8"/>
<path d="M1675 20L1671.850 23.250 1671.780 27.780 1667.250 27.850 1664 31 1660.750 27.850 1656.220 27.780 1656.150 23.250 1653 20 1656.150 16.750 1656.220 12.220 1660.750 12.150 1664 9 1667.250 12.150 1671.780 12.220 1671.850 16.750Z"/>
<circle cx="1664" cy="20" r="3.500"/>
<path d="M1698.500 17v-3a2 2 0 0 1 2-2h3M1710 12h3a2 2 0 0 1 2 2v3M1715 24v3a2 2 0 0 1-2 2h-3M1703.500 29h-3a2 2 0 0 1-2-2v-3" style="stroke-width:1.500"/>
<path d="M1737.500 17a2.500 2.500 0 0 1 2.500-2.500h3l2-3.500h6l2 3.500h3a2.500 2.500 0 0 1 2.500 2.500v8a2.500 2.500 0 0 1-2.500 2.500h-16a2.500 2.500 0 0 1-2.500-2.500z"/>
<circle cx="1748" cy="21" r="4.500"/>
</g>
<text class="tb" x="1475" y="20" textLength="88" lengthAdjust="spacingAndGlyphs">ATS double B</text>
<text x="1489" y="32.500" fill="#2962ff" font-size="12" textLength="59" lengthAdjust="spacingAndGlyphs">Sauvegarder</text>
<circle cx="1789" cy="20" r="15" fill="#2962ff"/>
<text x="1783" y="26" fill="#fff" font-size="16" font-weight="700">P</text>

<!-- window borders -->
<rect x="0" y="47" width="1.300" height="827" fill="#6a6d78"/>
<rect x="1794.600" y="47" width="1.400" height="827" fill="#6a6d78"/>
<rect x="0" y="872.600" width="1796" height="1.400" fill="#7a7d88"/>
</svg>
</body></html>
